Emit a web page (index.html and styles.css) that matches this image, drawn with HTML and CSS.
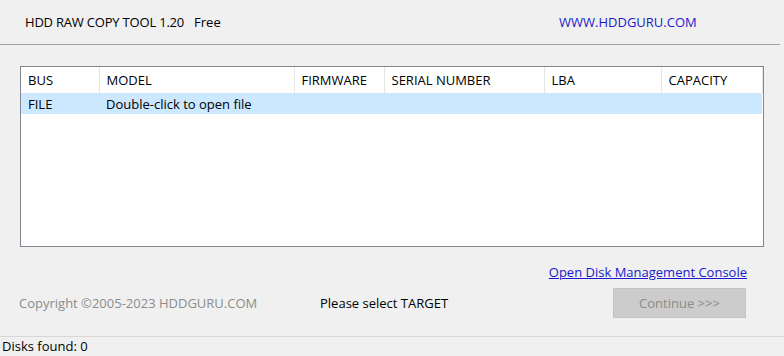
FILE: index.html
```html
<!DOCTYPE html>
<html lang="en">
<head>
    <meta charset="UTF-8">
    <title>HDD Raw Copy Tool</title>
    <link rel="stylesheet" href="styles.css">
</head>
<body>

    <div class="window">
        <div class="topbar">
            <div class="title">HDD RAW COPY TOOL 1.20<span class="edition">Free</span></div>
            <a class="site" href="#">WWW.HDDGURU.COM</a>
        </div>

        <div class="list">
            <table class="drives">
                <thead>
                    <tr>
                        <th class="c-bus">BUS</th>
                        <th class="c-model">MODEL</th>
                        <th class="c-fw">FIRMWARE</th>
                        <th class="c-sn">SERIAL NUMBER</th>
                        <th class="c-lba">LBA</th>
                        <th class="c-cap">CAPACITY</th>
                    </tr>
                </thead>
                <tbody>
                    <tr class="selected">
                        <td>FILE</td>
                        <td>Double-click to open file</td>
                        <td></td>
                        <td></td>
                        <td></td>
                        <td></td>
                    </tr>
                </tbody>
            </table>
        </div>

        <div class="links">
            <a href="#">Open Disk Management Console</a>
        </div>

        <div class="footer">
            <div class="copyright">Copyright ©2005-2023 HDDGURU.COM</div>
            <div class="status">Please select TARGET</div>
            <button class="continue" disabled>Continue &gt;&gt;&gt;</button>
        </div>

        <div class="statusbar">Disks found: 0</div>
    </div>

</body>
</html>
```

FILE: styles.css
```css
/* Global */
body {
    margin: 0;
    background-color: #f0f0f0;
    font-family: "Open Sans", "Noto Sans", Arial, sans-serif;
    font-size: 13px;
    color: #000;
}

.window {
    width: 784px;
    height: 356px;
    display: flex;
    flex-direction: column;
}

/* Top bar */
.topbar {
    height: 44px;
    margin-right: 4px;
    display: flex;
    align-items: center;
    padding-left: 25px;
    border-bottom: 1px solid #a0a0a0;
}

.title {
    width: 534px;
    letter-spacing: -0.2px;
}

.edition {
    margin-left: 10px;
    letter-spacing: 0;
}

.site {
    color: #1a1acc;
    text-decoration: none;
}

/* Drive list */
.list {
    margin: 21px 0 0 20px;
    width: 742px;
    height: 179px;
    border: 1px solid #828790;
    background-color: #fff;
}

.drives {
    border-collapse: collapse;
    width: 741px;
    table-layout: fixed;
}

.drives th {
    height: 26px;
    padding: 0 0 0 7px;
    text-align: left;
    font-weight: normal;
    border-right: 1px solid #e5e5e5;
    box-sizing: border-box;
}

.drives td {
    height: 21px;
    padding: 0 0 0 7px;
    box-sizing: border-box;
}

.c-bus { width: 78px; }
.c-model { width: 195px; }
.c-fw { width: 90px; }
.c-sn { width: 160px; }
.c-lba { width: 117px; }
.c-cap { width: 101px; }

.selected {
    background-color: #cce8ff;
}

/* Bottom area */
.links {
    margin-top: 16px;
    height: 19px;
    padding-right: 37px;
    text-align: right;
}

.links a {
    color: #1a1acc;
}

.footer {
    margin-top: 6px;
    display: flex;
    align-items: center;
    padding-left: 19px;
}

.copyright {
    width: 301px;
    color: #8c8c8c;
}

.status {
    width: 293px;
}

.continue {
    width: 133px;
    height: 30px;
    font-family: inherit;
    font-size: 13px;
    color: #8a8a8a;
    background-color: #cccccc;
    border: 1px solid #c4c4c4;
}

.statusbar {
    margin-top: auto;
    height: 19px;
    line-height: 19px;
    padding-left: 2px;
    border-top: 1px solid #d7d7d7;
}
```
